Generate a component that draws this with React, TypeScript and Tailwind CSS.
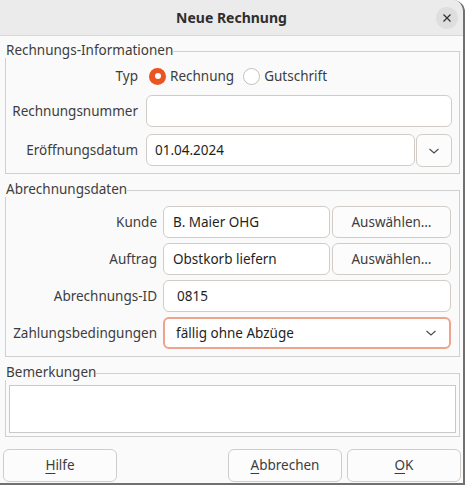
import React from "react";

const Chevron = () => (
  <svg width="12" height="8" viewBox="0 0 12 8" className="block">
    <polyline points="1.5,2 6,6 10.5,2" fill="none" stroke="#4a4a4a" strokeWidth="1.1" />
  </svg>
);

const Legend = ({ text }: { text: string }) => (
  <div className="flex items-start h-[16px]">
    <span className="text-[13.5px] leading-[16px] text-[#3d3d3d] pl-[1px]">{text}</span>
    <div className="flex-1 mt-[9px] h-[7px] border-t border-r border-[#cfcfcf]" />
  </div>
);

const Entry = ({ text, pl = "pl-[9px]", className = "" }: { text?: string; pl?: string; className?: string }) => (
  <div
    className={`h-[32px] rounded-[6px] border border-[#d1ccc7] bg-white flex items-center ${pl} text-[13.5px] text-[#1f1f1f] ${className}`}
  >
    {text}
  </div>
);

const Btn = ({ children, className = "" }: { children: React.ReactNode; className?: string }) => (
  <div
    className={`h-[32px] rounded-[6px] border border-[#d1ccc7] bg-[#fcfcfc] flex items-center justify-center text-[13.5px] text-[#3d3d3d] ${className}`}
  >
    {children}
  </div>
);

const Radio = ({ checked }: { checked: boolean }) =>
  checked ? (
    <div className="w-[17px] h-[17px] shrink-0 rounded-full bg-[#e95420] flex items-center justify-center">
      <div className="w-[6px] h-[6px] rounded-full bg-white" />
    </div>
  ) : (
    <div className="w-[17px] h-[17px] shrink-0 rounded-full border border-[#c4c0bb] bg-white" />
  );

const Label = ({ children }: { children: React.ReactNode }) => (
  <div className="text-right text-[13.5px] text-[#3d3d3d]">{children}</div>
);

export default function App() {
  return (
    <div className="w-[465px] h-[485px] bg-[#fafafa] border-r-2 border-b-2 border-[#707070] rounded-tr-[12px] overflow-hidden font-['Noto_Sans',sans-serif] text-[#3d3d3d]">
      {/* Title bar */}
      <div className="relative h-[36px] bg-[#ebebeb] border-b border-[#d8d8d8] flex items-center justify-center">
        <span className="text-[14px] font-bold text-[#2e2e2e]">Neue Rechnung</span>
        <div className="absolute right-[5px] top-[7px] w-[22px] h-[22px] rounded-full bg-[#dedede] flex items-center justify-center">
          <svg width="10" height="10" viewBox="0 0 10 10">
            <path d="M1.5 1.5 L8.5 8.5 M8.5 1.5 L1.5 8.5" stroke="#333" strokeWidth="1.3" />
          </svg>
        </div>
      </div>

      {/* Frame 1 */}
      <div className="ml-[5px] w-[455px] mt-[6px]">
        <Legend text="Rechnungs-Informationen" />
        <div className="border-l border-r border-b border-[#cfcfcf] pt-[6px] pb-[6px] pr-[7px]">
          <div className="grid grid-cols-[132px_1fr] gap-x-[8px] gap-y-[7px] items-center">
            <Label>Typ</Label>
            <div className="h-[24px] flex items-center pl-[3px] text-[13.5px]">
              <Radio checked />
              <span className="ml-[4px]">Rechnung</span>
              <div className="ml-[9px]">
                <Radio checked={false} />
              </div>
              <span className="ml-[4px]">Gutschrift</span>
            </div>
            <Label>Rechnungsnummer</Label>
            <Entry />
            <Label>Eröffnungsdatum</Label>
            <div className="flex gap-[1px]">
              <Entry text="01.04.2024" pl="pl-[8px]" className="flex-1" />
              <Btn className="w-[36px] h-[33px]">
                <Chevron />
              </Btn>
            </div>
          </div>
        </div>
      </div>

      {/* Frame 2 */}
      <div className="ml-[5px] w-[455px] mt-[7px]">
        <Legend text="Abrechnungsdaten" />
        <div className="border-l border-r border-b border-[#cfcfcf] pt-[9px] pb-[7px] pr-[8px]">
          <div className="grid grid-cols-[151px_1fr] gap-x-[6px] gap-y-[5px] items-center">
            <Label>Kunde</Label>
            <div className="flex gap-[2px]">
              <Entry text="B. Maier OHG" className="w-[167px]" />
              <Btn className="flex-1">Auswählen…</Btn>
            </div>
            <Label>Auftrag</Label>
            <div className="flex gap-[2px]">
              <Entry text="Obstkorb liefern" className="w-[167px]" />
              <Btn className="flex-1">Auswählen…</Btn>
            </div>
            <Label>Abrechnungs-ID</Label>
            <Entry text="0815" pl="pl-[13px]" />
            <Label>Zahlungsbedingungen</Label>
            <div className="h-[32px] rounded-[6px] border-2 border-[#eea48c] bg-white flex items-center pl-[11px] pr-[12px] text-[13.5px] text-[#1f1f1f]">
              <span className="flex-1">fällig ohne Abzüge</span>
              <Chevron />
            </div>
          </div>
        </div>
      </div>

      {/* Frame 3 */}
      <div className="ml-[5px] w-[455px] mt-[7px]">
        <Legend text="Bemerkungen" />
        <div className="border-l border-r border-b border-[#cfcfcf] pt-[5px] pb-[3px] px-[3px]">
          <div className="h-[48px] border border-[#c9c9c9] bg-white" />
        </div>
      </div>

      {/* Buttons */}
      <div className="flex mt-[12px] pl-[3px] pr-[2px]">
        <Btn className="w-[114px] h-[33px]">
          <span>
            <span className="underline underline-offset-[3px]">H</span>ilfe
          </span>
        </Btn>
        <div className="flex-1" />
        <Btn className="w-[114px] h-[33px]">
          <span>
            <span className="underline underline-offset-[3px]">A</span>bbrechen
          </span>
        </Btn>
        <Btn className="w-[114px] h-[33px] ml-[5px]">
          <span>
            <span className="underline underline-offset-[3px]">O</span>K
          </span>
        </Btn>
      </div>
    </div>
  );
}
